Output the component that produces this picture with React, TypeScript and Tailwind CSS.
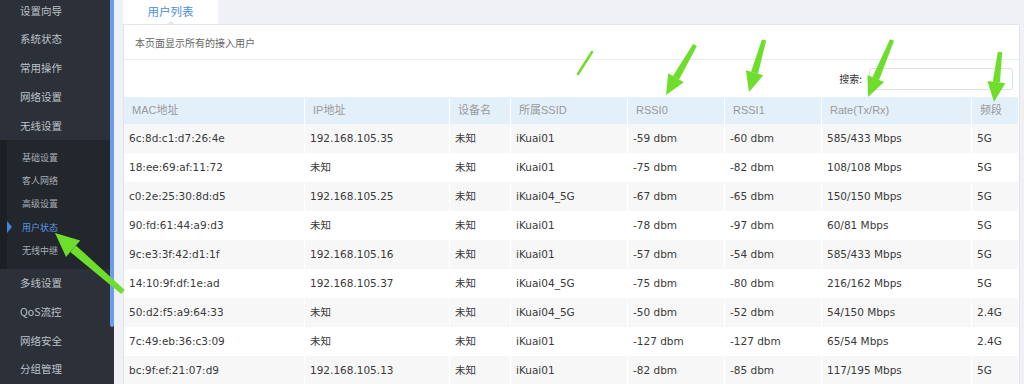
import React from 'react';

const topMenu = ['设置向导', '系统状态', '常用操作', '网络设置', '无线设置'];
const subMenu = ['基础设置', '客人网络', '高级设置', '用户状态', '无线中继'];
const bottomMenu = ['多线设置', 'QoS流控', '网络安全', '分组管理'];

const columns = [
    { title: 'MAC地址', w: 'w-[181px]' },
    { title: 'IP地址', w: 'w-[145px]' },
    { title: '设备名', w: 'w-[61px]' },
    { title: '所属SSID', w: 'w-[117px]' },
    { title: 'RSSI0', w: 'w-[97px]' },
    { title: 'RSSI1', w: 'w-[97px]' },
    { title: 'Rate(Tx/Rx)', w: 'w-[150px]' },
    { title: '频段', w: 'flex-1' },
];

const rows = [
    ['6c:8d:c1:d7:26:4e', '192.168.105.35', '未知', 'iKuai01', '-59 dbm', '-60 dbm', '585/433 Mbps', '5G'],
    ['18:ee:69:af:11:72', '未知', '未知', 'iKuai01', '-75 dbm', '-82 dbm', '108/108 Mbps', '5G'],
    ['c0:2e:25:30:8d:d5', '192.168.105.25', '未知', 'iKuai04_5G', '-67 dbm', '-65 dbm', '150/150 Mbps', '5G'],
    ['90:fd:61:44:a9:d3', '未知', '未知', 'iKuai01', '-78 dbm', '-97 dbm', '60/81 Mbps', '5G'],
    ['9c:e3:3f:42:d1:1f', '192.168.105.16', '未知', 'iKuai01', '-57 dbm', '-54 dbm', '585/433 Mbps', '5G'],
    ['14:10:9f:df:1e:ad', '192.168.105.37', '未知', 'iKuai04_5G', '-75 dbm', '-80 dbm', '216/162 Mbps', '5G'],
    ['50:d2:f5:a9:64:33', '未知', '未知', 'iKuai04_5G', '-50 dbm', '-52 dbm', '54/150 Mbps', '2.4G'],
    ['7c:49:eb:36:c3:09', '未知', '未知', 'iKuai01', '-127 dbm', '-127 dbm', '65/54 Mbps', '2.4G'],
    ['bc:9f:ef:21:07:d9', '192.168.105.13', '未知', 'iKuai01', '-82 dbm', '-85 dbm', '117/195 Mbps', '5G'],
];

const cjk = "font-['Noto_Sans_CJK_SC',sans-serif]";
const cellFont = "font-['DejaVu_Sans','Noto_Sans_CJK_SC',sans-serif]";
const headFont = "font-['Liberation_Sans','Noto_Sans_CJK_SC',sans-serif]";

// green annotation arrow, tapered shaft + head
function Arrow({ from, to, size = 1 }: { from: [number, number]; to: [number, number]; size?: number }) {
    const dx = to[0] - from[0];
    const dy = to[1] - from[1];
    const len = Math.hypot(dx, dy);
    const ux = dx / len;
    const uy = dy / len;
    const nx = -uy;
    const ny = ux;
    const hl = 20 * size;
    const hw = 9 * size;
    const tw = 2.2 * size;
    const bw = 3.6 * size;
    const bx = to[0] - ux * hl;
    const by = to[1] - uy * hl;
    const shaft = [
        [from[0] + nx * tw, from[1] + ny * tw],
        [bx + nx * bw, by + ny * bw],
        [bx - nx * bw, by - ny * bw],
        [from[0] - nx * tw, from[1] - ny * tw],
    ];
    const head = [to, [bx + nx * hw, by + ny * hw], [bx - nx * hw, by - ny * hw]];
    return (
        <g fill="#6fdd2b">
            <polygon points={shaft.map((p) => p.join(',')).join(' ')} />
            <polygon points={head.map((p) => p.join(',')).join(' ')} />
        </g>
    );
}

export default function App() {
    return (
        <div className="relative flex h-[384px] w-[1024px] overflow-hidden bg-[#eff1f5]">
            {/* Sidebar */}
            <aside className={`w-[110px] shrink-0 bg-[#2b3039] ${cjk}`}>
                <div className="mt-[-4px]">
                    {topMenu.map((item) => (
                        <div key={item} className="flex h-[28.75px] items-center pl-[20px] text-[10.5px] text-[#bfc3ca]">
                            {item}
                        </div>
                    ))}
                    <div className="flex bg-[#22272d]">
                        <div className="w-[7px] bg-[#1c2025]" />
                        <div className="flex-1 py-[6.5px]">
                            {subMenu.map((item) => (
                                <div
                                    key={item}
                                    className={`relative flex h-[23.2px] items-center pl-[15px] text-[9px] ${
                                        item === '用户状态' ? 'text-[#5d95e2]' : 'text-[#a9aeb6]'
                                    }`}
                                >
                                    {item === '用户状态' && (
                                        <span className="absolute left-0 top-[5px] h-0 w-0 border-y-[6.5px] border-l-[5px] border-y-transparent border-l-[#3f86de]" />
                                    )}
                                    {item}
                                </div>
                            ))}
                        </div>
                    </div>
                    {bottomMenu.map((item) => (
                        <div key={item} className="flex h-[28.75px] items-center pl-[20px] text-[10.5px] text-[#bfc3ca]">
                            {item}
                        </div>
                    ))}
                </div>
            </aside>

            {/* Sidebar scrollbar */}
            <div className="flex w-[4px] shrink-0 flex-col bg-[#2b3039]">
                <div className="h-[327px] rounded-b-[2px] bg-[#6a9ce7]" />
            </div>

            {/* Main */}
            <main className="flex min-w-0 flex-1 flex-col pl-[9px] pr-[4px]">
                <div className="flex h-[24px] shrink-0">
                    <div className={`relative flex w-[95px] items-center justify-center bg-white text-[11.5px] text-[#4a8fd8] ${cjk}`}>
                        用户列表
                        <span className="absolute bottom-[-1px] left-[44px] h-0 w-0 border-x-[4px] border-b-[4px] border-x-transparent border-b-[#e1e6ed]" />
                    </div>
                </div>

                <section className="flex-1 border-x border-t border-[#dfe5ec] bg-white">
                    <div className={`flex h-[35px] items-center border-b border-[#e9edf2] pl-[11px] text-[10px] text-[#666] ${cjk}`}>
                        本页面显示所有的接入用户
                    </div>
                    <div className="flex h-[37px] items-center justify-end pr-[6px]">
                        <span className={`mr-[7px] text-[10px] text-[#333] ${cjk}`}>搜索:</span>
                        <div className="h-[22px] w-[144px] rounded-[3px] border border-[#dde1e6] bg-white" />
                    </div>

                    {/* Table header */}
                    <div className={`flex h-[27px] bg-[#e4f0f9] ${headFont}`}>
                        {columns.map((c) => (
                            <div
                                key={c.title}
                                className={`${c.w} flex items-center border-r border-white pl-[8px] text-[11px] text-[#999]`}
                            >
                                {c.title}
                            </div>
                        ))}
                    </div>

                    {/* Table body */}
                    {rows.map((r, i) => (
                        <div key={r[0]} className={`flex h-[29px] ${i % 2 === 0 ? 'bg-[#f7f7f7]' : 'bg-white'} ${cellFont}`}>
                            {r.map((v, j) => (
                                <div
                                    key={j}
                                    className={`${columns[j].w} flex items-center whitespace-nowrap border-r border-white pl-[5px] text-[10.5px] text-[#3a3a3a]`}
                                >
                                    {v}
                                </div>
                            ))}
                        </div>
                    ))}
                </section>
            </main>

            {/* Annotation arrows */}
            <svg className="pointer-events-none absolute inset-0" width="1024" height="384">
                <Arrow from={[123, 292]} to={[55, 233]} size={1.2} />
                <line x1="592" y1="52" x2="578" y2="74" stroke="#6fdd2b" strokeWidth="2.5" strokeLinecap="round" />
                <Arrow from={[695, 45]} to={[666, 95]} />
                <Arrow from={[764, 40]} to={[749, 92]} />
                <Arrow from={[892, 40]} to={[868, 97]} />
                <Arrow from={[1000, 52]} to={[994, 102]} />
            </svg>
        </div>
    );
}
